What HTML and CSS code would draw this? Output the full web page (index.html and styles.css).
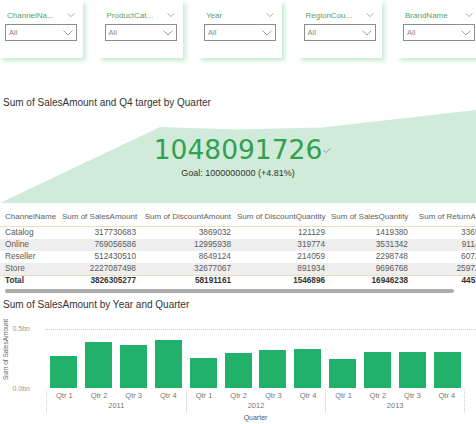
FILE: index.html
```html
<!DOCTYPE html>
<html>
<head>
<meta charset="utf-8">
<link rel="stylesheet" href="styles.css">
</head>
<body>
<div class="slicers">
  <div class="slicer">
    <div class="slicer-head"><span class="slicer-label">ChannelNa...</span><svg class="chev-s" viewBox="0 0 8 4"><path d="M0.5 0.5 L4 3.5 L7.5 0.5"/></svg></div>
    <div class="dropdown"><span>All</span><svg class="chev" viewBox="0 0 10 6"><path d="M0.5 0.5 L5 5 L9.5 0.5"/></svg></div>
  </div>
  <div class="slicer">
    <div class="slicer-head"><span class="slicer-label">ProductCat...</span><svg class="chev-s" viewBox="0 0 8 4"><path d="M0.5 0.5 L4 3.5 L7.5 0.5"/></svg></div>
    <div class="dropdown"><span>All</span><svg class="chev" viewBox="0 0 10 6"><path d="M0.5 0.5 L5 5 L9.5 0.5"/></svg></div>
  </div>
  <div class="slicer">
    <div class="slicer-head"><span class="slicer-label">Year</span><svg class="chev-s" viewBox="0 0 8 4"><path d="M0.5 0.5 L4 3.5 L7.5 0.5"/></svg></div>
    <div class="dropdown"><span>All</span><svg class="chev" viewBox="0 0 10 6"><path d="M0.5 0.5 L5 5 L9.5 0.5"/></svg></div>
  </div>
  <div class="slicer">
    <div class="slicer-head"><span class="slicer-label">RegionCou...</span><svg class="chev-s" viewBox="0 0 8 4"><path d="M0.5 0.5 L4 3.5 L7.5 0.5"/></svg></div>
    <div class="dropdown"><span>All</span><svg class="chev" viewBox="0 0 10 6"><path d="M0.5 0.5 L5 5 L9.5 0.5"/></svg></div>
  </div>
  <div class="slicer">
    <div class="slicer-head"><span class="slicer-label">BrandName</span><svg class="chev-s" viewBox="0 0 8 4"><path d="M0.5 0.5 L4 3.5 L7.5 0.5"/></svg></div>
    <div class="dropdown"><span>All</span><svg class="chev" viewBox="0 0 10 6"><path d="M0.5 0.5 L5 5 L9.5 0.5"/></svg></div>
  </div>
</div>

<section class="kpi">
  <div class="visual-title">Sum of SalesAmount and Q4 target by Quarter</div>
  <div class="kpi-body">
    <svg class="kpi-area" viewBox="0 0 476 97" preserveAspectRatio="none"><polygon points="0,94 160,18 236,20.5 322,18.5 476,1 476,94"/></svg>
    <div class="kpi-value-wrap"><span class="kpi-value">1048091726<svg class="kpi-check" viewBox="0 0 8 5"><path d="M0.5 2.5 L3 4.5 L7.5 0.5"/></svg></span></div>
    <div class="kpi-goal">Goal: 1000000000 (+4.81%)</div>
  </div>
</section>

<section class="table-visual">
  <div class="tr thead">
    <div class="cell">ChannelName</div>
    <div class="cell">Sum of SalesAmount</div>
    <div class="cell">Sum of DiscountAmount</div>
    <div class="cell">Sum of DiscountQuantity</div>
    <div class="cell">Sum of SalesQuantity</div>
    <div class="cell">Sum of ReturnAmount</div>
  </div>
  <div class="tr trow">
    <div class="cell">Catalog</div><div class="cell">317730683</div><div class="cell">3869032</div><div class="cell">121129</div><div class="cell">1419380</div><div class="cell">33652190</div>
  </div>
  <div class="tr trow alt">
    <div class="cell">Online</div><div class="cell">769056586</div><div class="cell">12995938</div><div class="cell">319774</div><div class="cell">3531342</div><div class="cell">91148826</div>
  </div>
  <div class="tr trow">
    <div class="cell">Reseller</div><div class="cell">512430510</div><div class="cell">8649124</div><div class="cell">214059</div><div class="cell">2298748</div><div class="cell">60723460</div>
  </div>
  <div class="tr trow alt">
    <div class="cell">Store</div><div class="cell">2227087498</div><div class="cell">32677067</div><div class="cell">891934</div><div class="cell">9696768</div><div class="cell">259722418</div>
  </div>
  <div class="tr ttotal">
    <div class="cell">Total</div><div class="cell">3826305277</div><div class="cell">58191161</div><div class="cell">1546896</div><div class="cell">16946238</div><div class="cell">44532894</div>
  </div>
  <div class="hscroll"></div>
</section>

<section class="chart">
  <div class="visual-title">Sum of SalesAmount by Year and Quarter</div>
  <div class="chart-main">
    <div class="y-title">Sum of SalesAmount</div>
    <div class="y-ticks"><span>0.5bn</span><span>0.0bn</span></div>
    <div class="plot-col">
      <div class="plot">
        <div class="gridline"></div>
        <div class="bars">
          <div class="slot"><div class="bar" style="height:32px"></div></div>
          <div class="slot"><div class="bar" style="height:46px"></div></div>
          <div class="slot"><div class="bar" style="height:43px"></div></div>
          <div class="slot"><div class="bar" style="height:48px"></div></div>
          <div class="slot"><div class="bar" style="height:30px"></div></div>
          <div class="slot"><div class="bar" style="height:35px"></div></div>
          <div class="slot"><div class="bar" style="height:38px"></div></div>
          <div class="slot"><div class="bar" style="height:39px"></div></div>
          <div class="slot"><div class="bar" style="height:29px"></div></div>
          <div class="slot"><div class="bar" style="height:36px"></div></div>
          <div class="slot"><div class="bar" style="height:36px"></div></div>
          <div class="slot"><div class="bar" style="height:36px"></div></div>
        </div>
      </div>
      <div class="x-axis">
        <div class="year">
          <div class="qtrs"><span>Qtr 1</span><span>Qtr 2</span><span>Qtr 3</span><span>Qtr 4</span></div>
          <div class="year-label">2011</div>
        </div>
        <div class="year">
          <div class="qtrs"><span>Qtr 1</span><span>Qtr 2</span><span>Qtr 3</span><span>Qtr 4</span></div>
          <div class="year-label">2012</div>
        </div>
        <div class="year">
          <div class="qtrs"><span>Qtr 1</span><span>Qtr 2</span><span>Qtr 3</span><span>Qtr 4</span></div>
          <div class="year-label">2013</div>
        </div>
      </div>
      <div class="x-title">Quarter</div>
    </div>
  </div>
</section>
</body>
</html>
```
FILE: styles.css
```css
* { box-sizing: border-box; }
html, body { margin: 0; padding: 0; }
body {
  width: 476px;
  height: 424px;
  overflow: hidden;
  background: #fff;
  font-family: "Liberation Sans", Arial, sans-serif;
  color: #333;
}

/* slicers */
.slicers {
  display: flex;
  gap: 15.5px;
  margin-left: -1px;
  height: 58px;
}
.slicer {
  flex: none;
  width: 84px;
  height: 58px;
  background: #fff;
  box-shadow: 3px 3px 4px rgba(110, 200, 145, 0.35);
  padding-top: 10px;
}
.slicer-head {
  display: flex;
  justify-content: space-between;
  align-items: flex-start;
  height: 12px;
  margin-bottom: 2px;
  padding: 0 8px;
}
.slicer-label {
  font-size: 8px;
  line-height: 12px;
  color: #58a06c;
  white-space: nowrap;
}
.chev-s {
  width: 8px;
  height: 4px;
  margin-top: 3px;
  fill: none;
  stroke: #9a9a9a;
  stroke-width: 0.8;
}
.dropdown {
  margin: 0 6px;
  height: 17px;
  border: 1px solid #8c8c8c;
  display: flex;
  align-items: center;
  justify-content: space-between;
  padding: 0 3px;
}
.dropdown span {
  font-size: 7.5px;
  color: #888;
}
.chev {
  width: 10px;
  height: 6px;
  fill: none;
  stroke: #8a8a8a;
  stroke-width: 0.8;
}

/* visual titles */
.visual-title {
  font-size: 10px;
  line-height: 12px;
  color: #333;
  padding-left: 3px;
  white-space: nowrap;
}

/* KPI */
.kpi { margin-top: 39px; }
.kpi-body {
  position: relative;
  height: 97px;
  padding-top: 26px;
  text-align: center;
}
.kpi-area {
  position: absolute;
  left: 0;
  top: 0;
  width: 476px;
  height: 97px;
  fill: #d0ebd9;
}
.kpi-value-wrap { position: relative; }
.kpi-value {
  position: relative;
  display: inline-block;
  font-family: "DejaVu Sans", sans-serif;
  font-size: 26.5px;
  line-height: 30px;
  color: #31a04f;
}
.kpi-check {
  position: absolute;
  left: 100%;
  top: 13px;
  margin-left: 0.5px;
  width: 8px;
  height: 5px;
  fill: none;
  stroke: #8f8f8f;
  stroke-width: 0.8;
}
.kpi-goal {
  position: relative;
  font-size: 9px;
  line-height: 11px;
  margin-top: 3px;
  color: #333;
}

/* table */
.table-visual {
  width: 476px;
  overflow: hidden;
}
.tr {
  display: grid;
  grid-template-columns: 59px 80px 95px 94px 83px 90px;
  width: 501px;
}
.thead {
  height: 21px;
  align-items: center;
  border-bottom: 1px solid #e9dfbb;
  font-size: 8px;
  color: #606060;
}
.trow {
  height: 12px;
  font-size: 8.3px;
  line-height: 10px;
  color: #5a5a5a;
}
.trow.alt { background: #eeeeee; }
.ttotal {
  height: 13px;
  border-top: 1px solid #e9dfbb;
  font-size: 8.2px;
  line-height: 10px;
  font-weight: bold;
  color: #333;
}
.cell {
  padding: 0 3px;
  text-align: right;
  white-space: nowrap;
  overflow: hidden;
}
.cell:first-child {
  text-align: left;
  padding-left: 5px;
}
.hscroll {
  margin: 1px 0 0 5px;
  width: 449px;
  height: 4px;
  border-radius: 2px;
  background: #acacac;
}

/* column chart */
.chart { margin-top: 6px; }
.chart-main {
  display: flex;
  align-items: flex-start;
  margin-top: 11px;
}
.y-title {
  width: 12px;
  height: 58px;
  writing-mode: vertical-rl;
  transform: rotate(180deg);
  text-align: center;
  font-size: 6.5px;
  line-height: 12px;
  color: #666;
  white-space: nowrap;
}
.y-ticks {
  width: 34px;
  height: 72px;
  display: flex;
  flex-direction: column;
  justify-content: space-between;
  padding: 2px 16px 0 0;
  text-align: right;
  font-size: 7px;
  line-height: 10px;
  color: #999;
}
.plot-col { width: 419px; }
.plot {
  height: 66px;
  display: flex;
  flex-direction: column;
}
.gridline {
  margin-top: 7px;
  margin-right: -11px;
  border-top: 1px dotted #d0d0d0;
}
.bars {
  flex: 1;
  display: flex;
  align-items: flex-end;
}
.slot {
  flex: 1;
  display: flex;
  justify-content: center;
}
.bar {
  width: 27px;
  background: #22b16a;
}
.x-axis {
  display: grid;
  grid-template-columns: repeat(3, 1fr);
  margin-top: 2px;
  height: 23px;
}
.year { border-left: 1px dotted #cfcfcf; }
.year:last-child { border-right: 1px dotted #cfcfcf; }
.qtrs {
  display: flex;
  margin-top: 1px;
}
.qtrs span {
  flex: 1;
  text-align: center;
  font-size: 7.5px;
  line-height: 10px;
  color: #777;
}
.year-label {
  text-align: center;
  font-size: 7.5px;
  line-height: 10px;
  color: #777;
}
.x-title {
  text-align: center;
  font-size: 7px;
  line-height: 10px;
  color: #555;
}
```
